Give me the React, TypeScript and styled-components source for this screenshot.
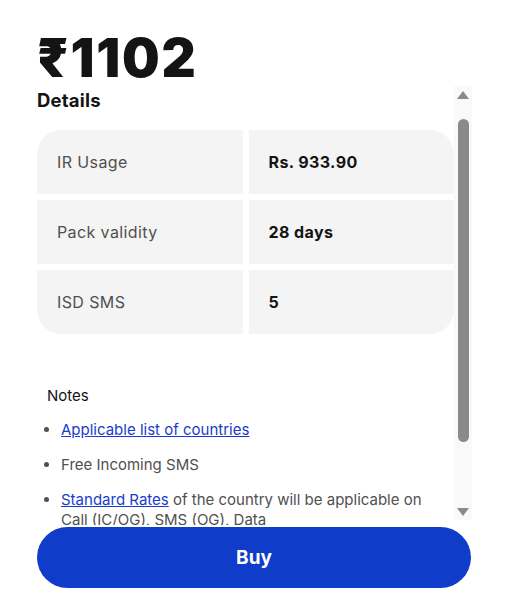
import React from "react"
import styled, { createGlobalStyle } from "styled-components"

const GlobalStyle = createGlobalStyle`
    body {
        margin: 0;
        background: #ffffff;
        font-family: Inter, "Noto Sans", sans-serif;
        color: #141414;
    }
`

const rows = [
    { label: "IR Usage", value: "Rs. 933.90" },
    { label: "Pack validity", value: "28 days" },
    { label: "ISD SMS", value: "5" },
]

function Arrow({ down }: { down?: boolean }) {
    return (
        <ArrowBox $down={down}>
            <svg width="12" height="8" viewBox="0 0 12 8">
                <path d={down ? "M0 0 H12 L6 8 Z" : "M0 8 H12 L6 0 Z"} fill="#8a8a8a" />
            </svg>
        </ArrowBox>
    )
}

export default function App() {
    return (
        <>
            <GlobalStyle />
            <Page>
                <Price>₹1102</Price>
                <Scroller>
                    <Content>
                        <Heading>Details</Heading>
                        <Table>
                            {rows.map((row) => (
                                <React.Fragment key={row.label}>
                                    <Cell>{row.label}</Cell>
                                    <Cell $strong>{row.value}</Cell>
                                </React.Fragment>
                            ))}
                        </Table>
                        <Notes>
                            <NotesTitle>Notes</NotesTitle>
                            <List>
                                <Item><Link href="#">Applicable list of countries</Link></Item>
                                <Item>Free Incoming SMS</Item>
                                <Item>
                                    <Link href="#">Standard Rates</Link> of the country will be applicable on
                                    Call (IC/OG), SMS (OG), Data
                                </Item>
                                <Item>Pack will be activated immediately after successful payment</Item>
                            </List>
                        </Notes>
                    </Content>
                    <Track>
                        <Arrow />
                        <Thumb />
                        <Arrow down />
                    </Track>
                </Scroller>
                <BuyButton>Buy</BuyButton>
            </Page>
        </>
    )
}

const Page = styled.div`
    width: 435px;
    padding: 28px 0 11px 37px;
    display: flex;
    flex-direction: column;
`

const Price = styled.div`
    font-size: 53px;
    font-weight: 900;
    line-height: 60px;
    letter-spacing: 1.8px;
    color: #141414;
`

const Scroller = styled.div`
    height: 437px;
    display: flex;
    margin-bottom: 2px;
`

const Content = styled.div`
    flex: 1;
    min-width: 0;
    overflow: hidden;
`

const Track = styled.div`
    width: 18px;
    margin: -2px 0 5px;
    background: #f9f9f9;
    display: flex;
    flex-direction: column;
    align-items: center;
`

const ArrowBox = styled.div<{ $down?: boolean }>`
    height: 17px;
    margin-top: ${(p) => (p.$down ? "auto" : "0")};
    display: flex;
    align-items: center;
    justify-content: center;
`

const Thumb = styled.div`
    width: 11px;
    height: 323px;
    margin-top: 16px;
    border-radius: 6px;
    background: #8a8a8a;
`

const Heading = styled.h2`
    margin: 0 0 18px;
    font-size: 18.5px;
    font-weight: 700;
    line-height: 24px;
    letter-spacing: 0.2px;
`

const Table = styled.div`
    display: grid;
    grid-template-columns: 1fr 1fr;
    gap: 6px;
    border-radius: 24px;
    overflow: hidden;
`

const Cell = styled.div<{ $strong?: boolean }>`
    height: 64px;
    display: flex;
    align-items: center;
    padding-left: 20px;
    background: #f4f4f4;
    font-size: 16px;
    letter-spacing: 0.4px;
    font-weight: ${(p) => (p.$strong ? 700 : 400)};
    color: ${(p) => (p.$strong ? "#141414" : "#505050")};
`

const Notes = styled.div`
    margin-top: 52px;
    padding-left: 10px;
    padding-right: 20px;
`

const NotesTitle = styled.div`
    font-size: 15px;
    line-height: 20px;
    color: #141414;
`

const List = styled.ul`
    margin: 14px 0 0;
    padding-left: 14px;
`

const Item = styled.li`
    font-size: 15px;
    line-height: 20px;
    color: #505050;
    margin-bottom: 15px;

    &::marker {
        color: #505050;
    }
`

const Link = styled.a`
    color: #1a3ccc;
    text-decoration: underline;
`

const BuyButton = styled.button`
    width: 434px;
    height: 61px;
    border: none;
    border-radius: 31px;
    background: #0f3cc9;
    color: #ffffff;
    font-family: Inter, "Noto Sans", sans-serif;
    font-size: 19px;
    font-weight: 700;
    cursor: pointer;
`
